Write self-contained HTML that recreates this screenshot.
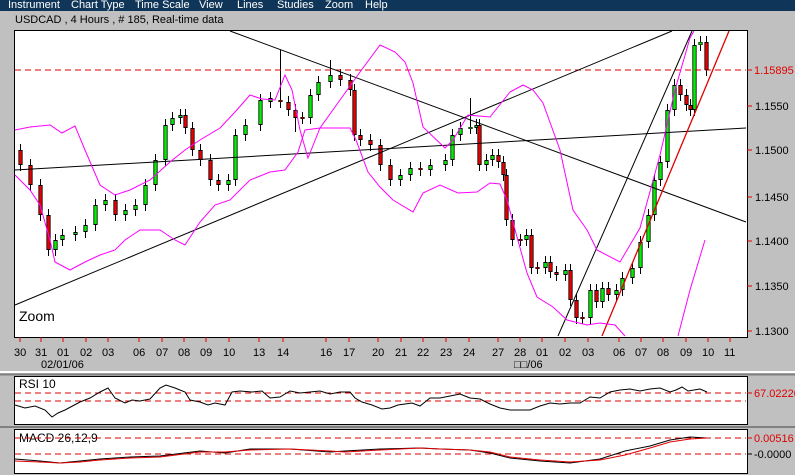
<!DOCTYPE html>
<html><head><meta charset="utf-8"><style>
body{margin:0;width:795px;height:475px;background:#c0c0c0;overflow:hidden;font-family:"Liberation Sans",sans-serif;}
#menu{position:absolute;left:0;top:0;width:795px;height:11px;background:#0f3558;}
#menu span{position:absolute;top:-1px;color:#fff;font-size:11px;line-height:12px;}
svg{position:absolute;left:0;top:0}
</style></head><body>
<div id="menu"><span style="left:8px">Instrument</span><span style="left:71px">Chart Type</span><span style="left:135px">Time Scale</span><span style="left:199px">View</span><span style="left:237px">Lines</span><span style="left:277px">Studies</span><span style="left:325px">Zoom</span><span style="left:365px">Help</span></div>
<svg width="795" height="475" font-family="Liberation Sans, sans-serif" font-size="11">
<text x="15" y="23">USDCAD , 4 Hours , # 185, Real-time data</text>
<rect x="14.5" y="30.5" width="733" height="307" fill="#fff" stroke="#000"/>
<line x1="0" y1="372" x2="795" y2="372" stroke="#fff" stroke-width="2"/>
<line x1="0" y1="374.5" x2="795" y2="374.5" stroke="#808080" stroke-width="2"/>
<rect x="14.5" y="376.5" width="733" height="48" fill="#fff" stroke="#000"/>
<line x1="0" y1="427" x2="795" y2="427" stroke="#808080" stroke-width="2"/>
<rect x="14.5" y="429.5" width="733" height="44" fill="#fff" stroke="#000"/>

<!-- wicks -->
<path fill="none" stroke="#000" stroke-width="1" d="M20.5 144V171M30.5 159V191M40.5 179V221M48.5 209V256M55.5 234V256M62.5 229V246M75.5 226V241M85.5 219V238M95.5 199V231M105.5 194V211M115.5 194V221M125.5 204V221M135.5 199V216M145.5 179V211M155.5 154V191M165.5 119V166M172.5 112V131M180.5 109V124M185.5 109V134M192.5 122V156M200.5 144V166M210.5 154V186M218.5 174V191M228.5 174V191M235.5 129V186M245.5 119V141M260.5 94V131M270.5 92V108M280.5 50V108M288.5 96V116M295.5 104V132M302.5 112V124M310.5 89V124M318.5 76V101M330.5 60V88M340.5 69V86M350.5 74V96M354.5 84V141M360.5 129V146M370.5 134V151M380.5 139V171M390.5 159V186M400.5 169V186M410.5 162V181M420.5 162V176M430.5 159V176M445.5 154V171M452.5 129V166M460.5 122V141M470.5 98V134M476.5 119V134M479.5 119V171M486.5 154V171M492.5 149V166M498.5 149V168M503.5 156V181M506.5 169V226M512.5 214V246M520.5 234V246M526.5 229V246M531.5 229V274M537.5 262V274M545.5 256V274M550.5 256V278M556.5 266V281M565.5 264V281M570.5 264V306M576.5 294V324M582.5 312V324M590.5 284V324M596.5 284V308M602.5 282V308M608.5 282V301M616.5 284V301M622.5 272V296M632.5 262V284M640.5 236V274M648.5 209V248M654.5 174V221M660.5 156V186M667.5 104V168M674.5 79V116M680.5 79V101M686.5 89V111M690.5 99V116M694.5 39V116M700.5 36V51M706.5 36V76"/>
<!-- green bodies -->
<path fill="none" stroke="#000" stroke-width="4.2" d="M55.5 250V240M62.5 240V235M75.5 235V232M85.5 232V225M95.5 225V205M105.5 205V200M125.5 215V210M135.5 210V205M145.5 205V185M155.5 185V160M165.5 160V125M172.5 125V118M180.5 118V115M228.5 185V180M235.5 180V135M245.5 135V125M260.5 125V100M270.5 102V98M310.5 118V95M318.5 95V82M330.5 82V75M400.5 180V175M410.5 175V168M430.5 170V165M445.5 165V160M452.5 160V135M460.5 135V128M470.5 129V127M476.5 128V125M486.5 165V160M492.5 160V155M526.5 240V235M545.5 268V262M565.5 275V270M590.5 318V290M602.5 302V288M616.5 295V290M622.5 290V278M632.5 278V268M640.5 268V242M648.5 242V215M654.5 215V180M660.5 180V162M667.5 162V110M674.5 110V85M694.5 110V45M700.5 45V42"/>
<path fill="none" stroke="#00f000" stroke-width="2.6" d="M55.5 249V241M62.5 239V236M75.5 234V233M85.5 231V226M95.5 224V206M105.5 204V201M125.5 214V211M135.5 209V206M145.5 204V186M155.5 184V161M165.5 159V126M172.5 124V119M180.5 117V116M228.5 184V181M235.5 179V136M245.5 134V126M260.5 124V101M270.5 101V99M310.5 117V96M318.5 94V83M330.5 81V76M400.5 179V176M410.5 174V169M430.5 169V166M445.5 164V161M452.5 159V136M460.5 134V129M470.5 128.5V127.5M476.5 127V126M486.5 164V161M492.5 159V156M526.5 239V236M545.5 267V263M565.5 274V271M590.5 317V291M602.5 301V289M616.5 294V291M622.5 289V279M632.5 277V269M640.5 267V243M648.5 241V216M654.5 214V181M660.5 179V163M667.5 161V111M674.5 109V86M694.5 109V46M700.5 44.5V42.5"/>
<!-- red bodies -->
<path fill="none" stroke="#000" stroke-width="4.2" d="M20.5 150V165M30.5 165V185M40.5 185V215M48.5 215V250M115.5 200V215M185.5 115V128M192.5 128V150M200.5 150V160M210.5 160V180M218.5 180V185M280.5 100V102M288.5 102V110M295.5 110V118M302.5 117V119M340.5 75V80M350.5 80V90M354.5 90V135M360.5 135V140M370.5 140V145M380.5 145V165M390.5 165V180M420.5 168V170M479.5 125V165M498.5 155V162M503.5 162V175M506.5 175V220M512.5 220V240M520.5 239V241M531.5 235V268M537.5 267V269M550.5 262V272M556.5 272V275M570.5 270V300M576.5 300V318M582.5 317V319M596.5 290V302M608.5 288V295M680.5 85V95M686.5 95V105M690.5 105V110M706.5 42V70"/>
<path fill="none" stroke="#e80000" stroke-width="2.6" d="M20.5 151V164M30.5 166V184M40.5 186V214M48.5 216V249M115.5 201V214M185.5 116V127M192.5 129V149M200.5 151V159M210.5 161V179M218.5 181V184M280.5 100.5V101.5M288.5 103V109M295.5 111V117M302.5 117.5V118.5M340.5 76V79M350.5 81V89M354.5 91V134M360.5 136V139M370.5 141V144M380.5 146V164M390.5 166V179M420.5 168.5V169.5M479.5 126V164M498.5 156V161M503.5 163V174M506.5 176V219M512.5 221V239M520.5 239.5V240.5M531.5 236V267M537.5 267.5V268.5M550.5 263V271M556.5 273V274M570.5 271V299M576.5 301V317M582.5 317.5V318.5M596.5 291V301M608.5 289V294M680.5 86V94M686.5 96V104M690.5 106V109M706.5 43V69"/>

<line x1="15" y1="70" x2="746" y2="70" stroke="#e00000" stroke-dasharray="6,4"/>
<line x1="230" y1="31" x2="746" y2="222" stroke="#000"/>
<line x1="15" y1="305" x2="672" y2="31" stroke="#000"/>
<line x1="15" y1="170" x2="746" y2="128" stroke="#000"/>
<line x1="558" y1="336" x2="692" y2="31" stroke="#000"/>
<line x1="602" y1="336" x2="729" y2="31" stroke="#e00000" stroke-width="1.3"/>

<polyline fill="none" stroke="#ff00ff" points="15,130 30,127 50,125 62,133 75,126 85,150 100,185 115,195 130,190 150,180 170,162 185,150 200,140 220,128 235,112 250,95 262,99 275,100 285,75 292,90 300,130 308,158 320,128 340,100 360,72 380,45 395,52 405,62 413,83 423,127 445,148 453,140 468,115 490,117 510,92 523,85 533,90 543,103 560,150 573,210 587,230 597,250 620,262 640,228 660,155 675,90 690,38 694,31"/>
<polyline fill="none" stroke="#ff00ff" points="15,175 30,190 40,205 50,240 55,262 70,270 85,262 100,255 115,250 125,240 140,230 160,230 175,240 185,245 200,222 215,205 230,200 250,180 270,172 285,170 298,152 305,130 320,128 350,128 356,140 368,172 380,187 393,200 413,212 423,193 440,185 458,193 477,192 490,183 500,184 507,200 517,237 527,273 537,297 553,307 567,320 587,325 600,323 615,325 625,336"/>
<polyline fill="none" stroke="#ff00ff" points="678,336 690,290 705,240"/>

<g fill="#e00000" stroke="none"></g>
<g stroke="#e00000"><line x1="747" y1="106" x2="752" y2="106"/><line x1="747" y1="150" x2="752" y2="150"/><line x1="747" y1="197" x2="752" y2="197"/><line x1="747" y1="241" x2="752" y2="241"/><line x1="747" y1="286" x2="752" y2="286"/><line x1="747" y1="331" x2="752" y2="331"/><line x1="747" y1="70" x2="752" y2="70"/><line x1="747" y1="393" x2="752" y2="393"/><line x1="747" y1="438" x2="752" y2="438"/></g>
<line x1="747" y1="454" x2="752" y2="454" stroke="#000"/>
<text x="755" y="110">1.1550</text><text x="755" y="154">1.1500</text><text x="755" y="201">1.1450</text><text x="755" y="245">1.1400</text><text x="755" y="290">1.1350</text><text x="755" y="335">1.1300</text>
<text x="754" y="74" fill="#e00000">1.15895</text>
<text x="754" y="397" fill="#e00000">67.02220</text>
<text x="754" y="442" fill="#e00000">0.00516</text>
<text x="754" y="458">-0.0000</text>

<g stroke="#e00000"><path d="M20 337v5M41 337v5M63 337v5M86 337v5M108 337v5M139 337v5M162 337v5M184 337v5M206 337v5M229 337v5M259 337v5M283 337v5M326 337v5M349 337v5M378 337v5M401 337v5M423 337v5M446 337v5M469 337v5M498 337v5M520 337v5M542 337v5M565 337v5M588 337v5M619 337v5M641 337v5M663 337v5M686 337v5M708 337v5M730 337v5"/></g>
<g>
<text x="14" y="356">30</text><text x="35" y="356">31</text><text x="57" y="356">01</text><text x="80" y="356">02</text><text x="102" y="356">03</text><text x="133" y="356">06</text><text x="156" y="356">07</text><text x="178" y="356">08</text><text x="200" y="356">09</text><text x="223" y="356">10</text><text x="253" y="356">13</text><text x="277" y="356">14</text><text x="320" y="356">16</text><text x="343" y="356">17</text><text x="372" y="356">20</text><text x="395" y="356">21</text><text x="417" y="356">22</text><text x="440" y="356">23</text><text x="463" y="356">24</text><text x="492" y="356">27</text><text x="514" y="356">28</text><text x="536" y="356">01</text><text x="559" y="356">02</text><text x="582" y="356">03</text><text x="613" y="356">06</text><text x="635" y="356">07</text><text x="657" y="356">08</text><text x="680" y="356">09</text><text x="702" y="356">10</text><text x="724" y="356">11</text>
</g>
<text x="41" y="368">02/01/06</text>
<text x="514" y="368">□□/06</text>
<text x="19" y="321" font-size="14">Zoom</text>
<text x="19" y="388" font-size="12">RSI 10</text>
<text x="19" y="442" font-size="12">MACD 26,12,9</text>

<line x1="15" y1="393" x2="746" y2="393" stroke="#e00000" stroke-dasharray="6,4"/>
<line x1="15" y1="401" x2="746" y2="401" stroke="#e00000" stroke-dasharray="6,4"/>
<polyline fill="none" stroke="#000" points="15,405 25,408 35,406 45,410 52,417 58,413 65,410 80,402 90,398 100,392 108,388 115,398 125,403 132,400 140,401 150,399 160,388 166,385 175,388 185,392 190,400 200,402 208,405 215,403 225,405 232,392 240,391 252,392 262,391 270,398 280,397 290,391 300,393 310,392 320,391 330,394 340,392 350,392 355,398 362,402 372,405 382,409 390,408 398,405 405,404 412,403 420,406 430,398 440,398 450,396 460,394 470,398 480,399 490,404 500,408 510,410 520,410 530,410 540,406 550,403 560,404 570,403 580,403 590,397 600,398 610,392 620,390 630,389 640,391 650,389 660,388 670,392 676,390 682,387 688,391 694,390 700,389 707,392"/>
<line x1="15" y1="438" x2="746" y2="438" stroke="#e00000" stroke-dasharray="6,4"/>
<line x1="15" y1="454" x2="746" y2="454" stroke="#e00000" stroke-dasharray="6,4"/>
<polyline fill="none" stroke="#000" points="15,459 40,461 60,463 80,461 100,459 130,457 160,456 200,451 225,453 250,449 290,449 330,452 345,451 380,449 420,448 440,449 470,450 490,453 510,458 540,461 570,463 600,459 625,451 650,446 670,440 690,437 707,438"/>
<polyline fill="none" stroke="#e00000" points="15,461 40,462 60,463 80,462 100,460 130,458 160,457 200,452 225,452 250,450 290,449 330,451 345,452 380,450 420,448 440,449 470,450 490,452 510,457 540,460 570,462 600,460 625,455 650,448 670,442 690,439 707,438"/>
</svg>
</body></html>
